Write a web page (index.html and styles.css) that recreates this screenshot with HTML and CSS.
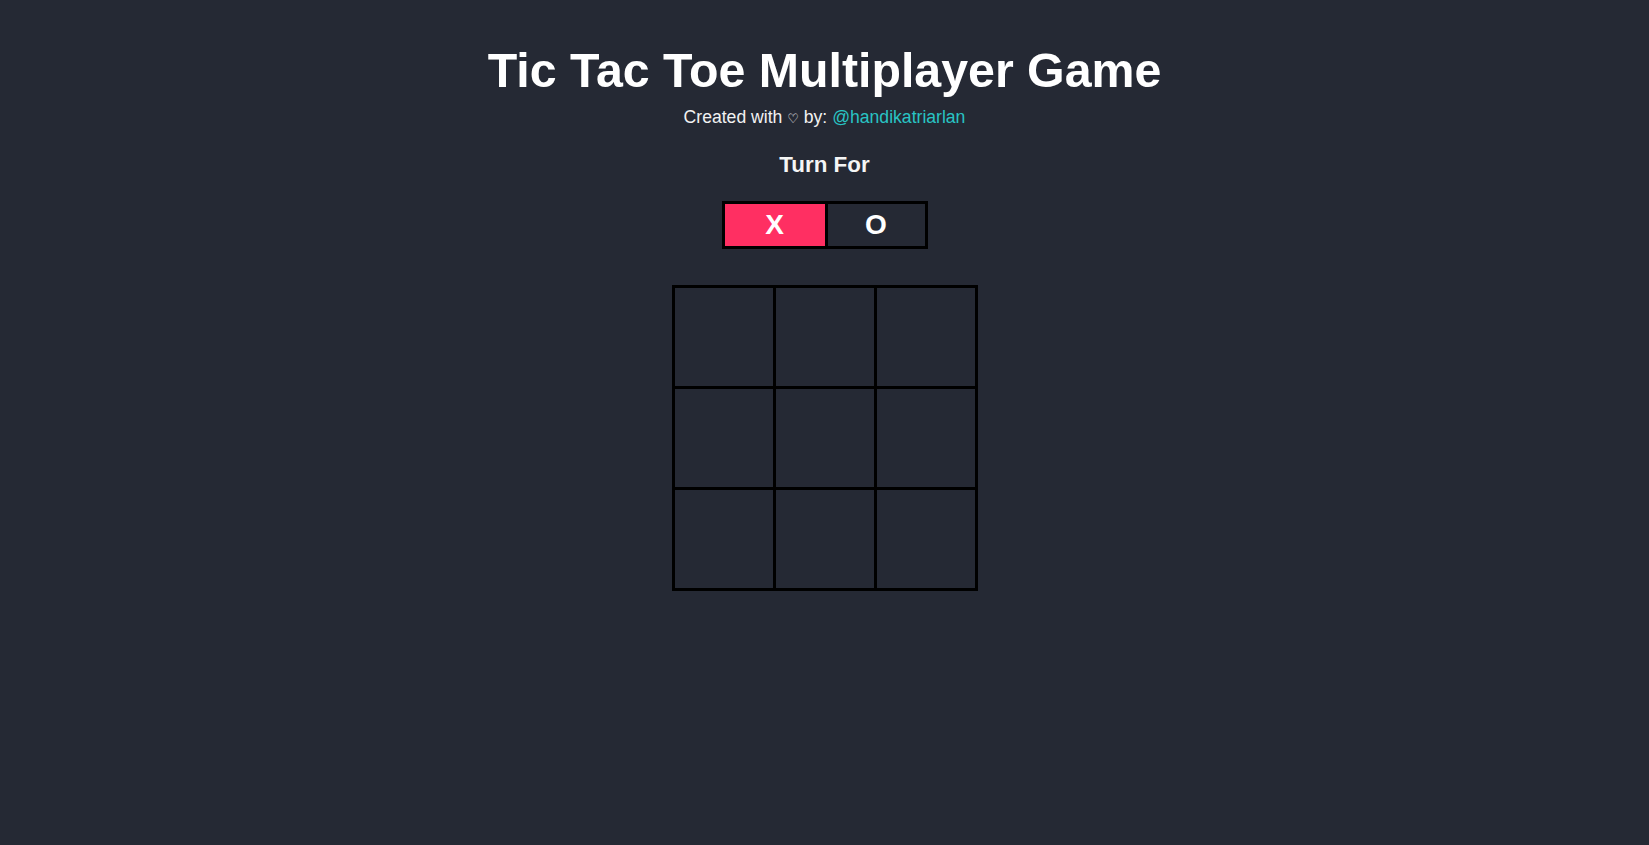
FILE: index.html
```html
<!DOCTYPE html>
<html lang="en">
<head>
<meta charset="utf-8">
<title>Tic Tac Toe Multiplayer Game</title>
<link rel="stylesheet" href="styles.css">
</head>
<body>
<main class="app">
  <h1 class="title">Tic Tac Toe Multiplayer Game</h1>
  <p class="credit">Created with <span class="heart">♡</span> by: <a class="author" href="#">@handikatriarlan</a></p>
  <h2 class="turn-label">Turn For</h2>
  <div class="turn-box">
    <div class="turn turn-x active">X</div>
    <div class="turn turn-o">O</div>
  </div>
  <div class="board">
    <div class="cell"></div>
    <div class="cell"></div>
    <div class="cell"></div>
    <div class="cell"></div>
    <div class="cell"></div>
    <div class="cell"></div>
    <div class="cell"></div>
    <div class="cell"></div>
    <div class="cell"></div>
  </div>
</main>
</body>
</html>
```

FILE: styles.css
```css
html, body {
  margin: 0;
  padding: 0;
}
body {
  background: #252934;
  color: #ffffff;
  font-family: "Liberation Sans", Arial, sans-serif;
  min-height: 100vh;
}
.app {
  display: flex;
  flex-direction: column;
  align-items: center;
  padding-top: 43px;
}
.title {
  margin: 0;
  font-size: 48.3px;
  font-weight: 700;
  line-height: 55px;
}
.credit {
  margin: 9px 0 0;
  font-size: 17.6px;
  line-height: 20px;
  color: #f2f2f2;
}
.heart {
  font-family: "DejaVu Sans", sans-serif;
  font-size: 13px;
}
.author {
  color: #29c4c4;
  text-decoration: none;
}
.turn-label {
  margin: 23px 0 0;
  font-size: 22.4px;
  font-weight: 700;
  line-height: 26px;
  color: #f5f5f5;
}
.turn-box {
  margin-top: 23px;
  display: flex;
  border: 3px solid #000000;
}
.turn {
  width: 100px;
  height: 42px;
  display: flex;
  align-items: center;
  justify-content: center;
  font-size: 28px;
  font-weight: 700;
  color: #ffffff;
  box-sizing: border-box;
}
.turn-o {
  border-left: 3px solid #000000;
}
.active {
  background: #ff2f62;
}
.board {
  margin-top: 36px;
  display: grid;
  grid-template-columns: repeat(3, 98px);
  grid-template-rows: repeat(3, 98px);
  gap: 3px;
  background: #000000;
  border: 3px solid #000000;
}
.cell {
  background: #252934;
}
```
